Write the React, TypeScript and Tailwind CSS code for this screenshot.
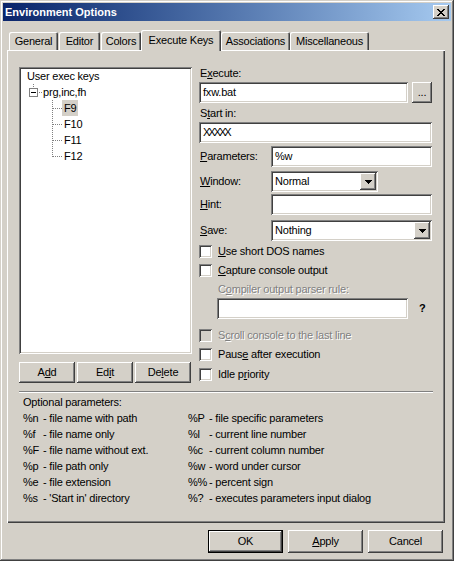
import React from "react";

const FIELD =
  "bg-white shadow-[inset_1px_1px_#808080,inset_-1px_-1px_#ffffff,inset_2px_2px_#404040,inset_-2px_-2px_#d4d0c8]";
const FIELD_OFF =
  "bg-[#d4d0c8] shadow-[inset_1px_1px_#808080,inset_-1px_-1px_#ffffff,inset_2px_2px_#404040,inset_-2px_-2px_#d4d0c8]";
const RAISED =
  "bg-[#d4d0c8] shadow-[inset_-1px_-1px_#404040,inset_1px_1px_#ffffff,inset_-2px_-2px_#808080,inset_2px_2px_#d4d0c8]";
const OFF_TEXT = "text-[#808080] [text-shadow:1px_1px_0_#ffffff]";

function Btn({ children, className = "" }: { children: React.ReactNode; className?: string }) {
  return (
    <div className={`${RAISED} flex items-center justify-center ${className}`}>{children}</div>
  );
}

function Field({ value, className = "" }: { value?: string; className?: string }) {
  return (
    <div className={`${FIELD} h-[21px] flex items-center pl-[4px] ${className}`}>{value}</div>
  );
}

function Arrow() {
  return (
    <svg width="7" height="4" viewBox="0 0 7 4" shapeRendering="crispEdges">
      <path d="M0 0h7v1H0zM1 1h5v1H1zM2 2h3v1H2zM3 3h1v1H3z" fill="#000" />
    </svg>
  );
}

function Combo({ value, className = "" }: { value: string; className?: string }) {
  return (
    <div className={`${FIELD} h-[21px] flex items-stretch p-[2px] ${className}`}>
      <div className="flex-1 flex items-center pl-[2px]">{value}</div>
      <div className={`${RAISED} w-[16px] flex items-center justify-center`}>
        <Arrow />
      </div>
    </div>
  );
}

function Check({
  children,
  disabled = false,
  className = "",
}: {
  children: React.ReactNode;
  disabled?: boolean;
  className?: string;
}) {
  return (
    <div className={`flex items-center h-[13px] ${className}`}>
      <div className={`${disabled ? FIELD_OFF : FIELD} w-[13px] h-[13px] shrink-0`} />
      <span className={`ml-[6px] ${disabled ? OFF_TEXT : ""}`}>{children}</span>
    </div>
  );
}

function Tab({
  children,
  className = "",
  active = false,
}: {
  children: React.ReactNode;
  className?: string;
  active?: boolean;
}) {
  return (
    <div
      className={`bg-[#d4d0c8] rounded-t-[2px] shadow-[inset_1px_1px_#ffffff,inset_-1px_0_#404040,inset_-2px_0_#808080] flex items-center justify-center ${
        active ? "relative z-10 h-[21px] -mb-[1px] pb-[1px]" : "h-[18px] pt-[1px]"
      } ${className}`}
    >
      {children}
    </div>
  );
}

function ChildRow({ label, last = false, selected = false }: { label: string; last?: boolean; selected?: boolean }) {
  return (
    <div className="flex items-center h-[16px]">
      <svg width="35" height="16" viewBox="0 0 35 16" shapeRendering="crispEdges">
        <line x1="25.5" y1="0" x2="25.5" y2={last ? 9 : 16} stroke="#808080" strokeDasharray="1 1" />
        <line x1="26" y1="8.5" x2="35" y2="8.5" stroke="#808080" strokeDasharray="1 1" />
      </svg>
      <span className={`px-[2px] h-[16px] flex items-center ${selected ? "bg-[#d4d0c8]" : ""}`}>{label}</span>
    </div>
  );
}

const leftParams: [string, string][] = [
  ["%n", "- file name with path"],
  ["%f", "- file name only"],
  ["%F", "- file name without ext."],
  ["%p", "- file path only"],
  ["%e", "- file extension"],
  ["%s", "- 'Start in' directory"],
];

const rightParams: [string, string][] = [
  ["%P", "- file specific parameters"],
  ["%l", "- current line number"],
  ["%c", "- current column number"],
  ["%w", "- word under cursor"],
  ["%%", "- percent sign"],
  ["%?", "- executes parameters input dialog"],
];

export default function App() {
  return (
    <div className="w-[454px] h-[561px] bg-[#d4d0c8] p-[3px] text-[11px] leading-[13px] text-black font-['Liberation_Sans',Arial,sans-serif] tracking-[-0.2px] shadow-[inset_-1px_-1px_#404040,inset_1px_1px_#d4d0c8,inset_-2px_-2px_#808080,inset_2px_2px_#ffffff] select-none">
      {/* Title bar */}
      <div className="h-[18px] bg-gradient-to-r from-[#0a246a] to-[#a6caf0] flex items-center justify-between pl-[2px] pr-[2px]">
        <span className="text-white font-bold tracking-normal">Environment Options</span>
        <Btn className="w-[16px] h-[14px]">
          <svg width="8" height="7" viewBox="0 0 8 7" shapeRendering="crispEdges">
            <path
              d="M0 0h2v1H0zM6 0h2v1H6zM1 1h2v1H1zM5 1h2v1H5zM2 2h4v1H2zM3 3h2v1H3zM2 4h4v1H2zM1 5h2v1H1zM5 5h2v1H5zM0 6h2v1H0zM6 6h2v1H6z"
              fill="#000"
            />
          </svg>
        </Btn>
      </div>

      {/* Tabs */}
      <div className="mt-[9px] h-[20px] flex items-end pl-[6px]">
        <Tab className="w-[49px] mr-[1px]">General</Tab>
        <Tab className="w-[41px] mr-[1px]">Editor</Tab>
        <Tab className="w-[40px]">Colors</Tab>
        <Tab className="w-[80px]" active>
          Execute Keys
        </Tab>
        <Tab className="w-[69px]">Associations</Tab>
        <Tab className="w-[79px]">Miscellaneous</Tab>
      </div>

      {/* Panel */}
      <div className="ml-[4px] w-[438px] h-[473px] shadow-[inset_1px_1px_#ffffff,inset_-1px_-1px_#404040,inset_-2px_-2px_#808080] pl-[12px] pt-[17px]">
        <div className="flex">
          {/* Left column */}
          <div className="w-[173px]">
            <div className={`${FIELD} h-[287px] pt-[1px] pl-[8px]`}>
              <div className="h-[16px] flex items-center">User exec keys</div>
              <div className="flex items-center h-[16px]">
                <svg width="16" height="16" viewBox="0 0 16 16" shapeRendering="crispEdges">
                  <line x1="6.5" y1="0" x2="6.5" y2="4" stroke="#808080" strokeDasharray="1 1" />
                  <rect x="2.5" y="4.5" width="8" height="8" fill="#fff" stroke="#808080" />
                  <line x1="4" y1="8.5" x2="9" y2="8.5" stroke="#000" />
                  <line x1="12" y1="8.5" x2="16" y2="8.5" stroke="#808080" strokeDasharray="1 1" />
                </svg>
                <span>prg,inc,fh</span>
              </div>
              <ChildRow label="F9" selected />
              <ChildRow label="F10" />
              <ChildRow label="F11" />
              <ChildRow label="F12" last />
            </div>
            <div className="mt-[8px] flex gap-[2px]">
              <Btn className="w-[56px] h-[21px]">
                A<u>d</u>d
              </Btn>
              <Btn className="w-[56px] h-[21px]">
                Ed<u>i</u>t
              </Btn>
              <Btn className="w-[56px] h-[21px]">
                De<u>l</u>ete
              </Btn>
            </div>
          </div>

          {/* Right column */}
          <div className="ml-[7px] w-[233px] flex flex-col">
            <div className="h-[13px] pl-[1px]">
              E<u>x</u>ecute:
            </div>
            <div className="mt-[2px] flex">
              <Field value="fxw.bat" className="w-[209px]" />
              <Btn className="ml-[4px] w-[20px] h-[21px]">...</Btn>
            </div>
            <div className="mt-[4px] h-[13px] pl-[1px]">
              S<u>t</u>art in:
            </div>
            <Field value="XXXXX" className="mt-[2px] w-[233px] tracking-[-2px]" />
            <div className="mt-[3px] flex items-center">
              <span className="w-[72px] pl-[1px]">
                <u>P</u>arameters:
              </span>
              <Field value="%w" className="w-[161px]" />
            </div>
            <div className="mt-[4px] flex items-center">
              <span className="w-[72px] pl-[1px]">
                <u>W</u>indow:
              </span>
              <Combo value="Normal" className="w-[107px]" />
            </div>
            <div className="mt-[2px] flex items-center">
              <span className="w-[72px] pl-[1px]">
                <u>H</u>int:
              </span>
              <Field className="w-[161px]" />
            </div>
            <div className="mt-[5px] flex items-center">
              <span className="w-[72px] pl-[1px]">
                <u>S</u>ave:
              </span>
              <Combo value="Nothing" className="w-[161px]" />
            </div>
            <Check className="mt-[4px]">
              <u>U</u>se short DOS names
            </Check>
            <Check className="mt-[6px]">
              <u>C</u>apture console output
            </Check>
            <div className={`mt-[6px] h-[13px] pl-[19px] ${OFF_TEXT}`}>
              C<u>o</u>mpiler output parser rule:
            </div>
            <div className="mt-[2px] flex items-center pl-[18px]">
              <div className={`${FIELD} w-[191px] h-[21px]`} />
              <span className="ml-[11px] font-bold">?</span>
            </div>
            <Check className="mt-[10px]" disabled>
              S<u>c</u>roll console to the last line
            </Check>
            <Check className="mt-[6px]">
              Paus<u>e</u> after execution
            </Check>
            <Check className="mt-[7px]">
              Idle p<u>r</u>iority
            </Check>
          </div>
        </div>

        {/* Separator */}
        <div className="mt-[8px] w-[414px] h-[2px] border-t border-t-[#808080] border-b border-b-white" />

        {/* Optional parameters */}
        <div className="mt-[1px] pl-[4px] leading-[16px]">
          <div>Optional parameters:</div>
          <div className="flex">
            <div className="w-[165px]">
              {leftParams.map(([k, d]) => (
                <div key={k} className="flex">
                  <span className="w-[20px]">{k}</span>
                  <span>{d}</span>
                </div>
              ))}
            </div>
            <div>
              {rightParams.map(([k, d]) => (
                <div key={k} className="flex">
                  <span className="w-[21px]">{k}</span>
                  <span>{d}</span>
                </div>
              ))}
            </div>
          </div>
        </div>
      </div>

      {/* Dialog buttons */}
      <div className="mt-[7px] flex justify-end gap-[5px] mr-[8px]">
        <div className="w-[75px] h-[23px] border border-black flex">
          <Btn className="flex-1">OK</Btn>
        </div>
        <Btn className="w-[75px] h-[23px]">
          <u>A</u>pply
        </Btn>
        <Btn className="w-[75px] h-[23px]">Cancel</Btn>
      </div>
    </div>
  );
}
